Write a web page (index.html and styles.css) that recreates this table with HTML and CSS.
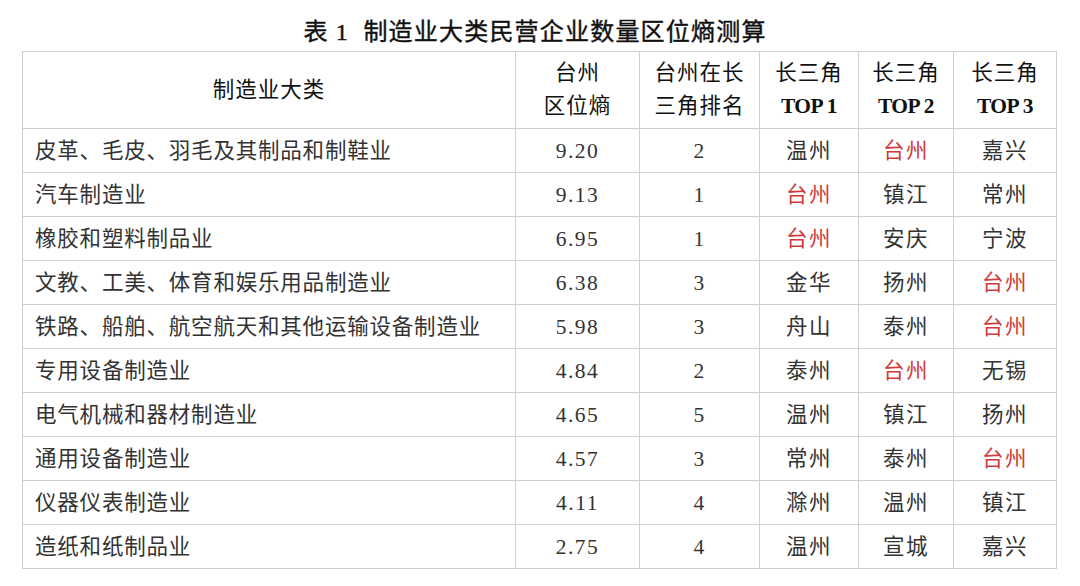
FILE: index.html
```html
<!DOCTYPE html>
<html lang="zh-CN">
<head>
<meta charset="utf-8">
<link rel="stylesheet" href="styles.css">
</head>
<body>
<div class="page">
  <h1 class="title">表 1&nbsp; 制造业大类民营企业数量区位熵测算</h1>
  <table class="tbl">
    <colgroup>
      <col class="c-name"><col class="c-val"><col class="c-rank"><col class="c-t1"><col class="c-t2"><col class="c-t3">
    </colgroup>
    <thead>
      <tr>
        <th>制造业大类</th>
        <th>台州<br>区位熵</th>
        <th>台州在长<br>三角排名</th>
        <th>长三角<br><b class="en">TOP 1</b></th>
        <th>长三角<br><b class="en">TOP 2</b></th>
        <th>长三角<br><b class="en">TOP 3</b></th>
      </tr>
    </thead>
    <tbody>
      <tr><td class="name">皮革、毛皮、羽毛及其制品和制鞋业</td><td>9.20</td><td>2</td><td>温州</td><td class="red">台州</td><td>嘉兴</td></tr>
      <tr><td class="name">汽车制造业</td><td>9.13</td><td>1</td><td class="red">台州</td><td>镇江</td><td>常州</td></tr>
      <tr><td class="name">橡胶和塑料制品业</td><td>6.95</td><td>1</td><td class="red">台州</td><td>安庆</td><td>宁波</td></tr>
      <tr><td class="name">文教、工美、体育和娱乐用品制造业</td><td>6.38</td><td>3</td><td>金华</td><td>扬州</td><td class="red">台州</td></tr>
      <tr><td class="name">铁路、船舶、航空航天和其他运输设备制造业</td><td>5.98</td><td>3</td><td>舟山</td><td>泰州</td><td class="red">台州</td></tr>
      <tr><td class="name">专用设备制造业</td><td>4.84</td><td>2</td><td>泰州</td><td class="red">台州</td><td>无锡</td></tr>
      <tr><td class="name">电气机械和器材制造业</td><td>4.65</td><td>5</td><td>温州</td><td>镇江</td><td>扬州</td></tr>
      <tr><td class="name">通用设备制造业</td><td>4.57</td><td>3</td><td>常州</td><td>泰州</td><td class="red">台州</td></tr>
      <tr><td class="name">仪器仪表制造业</td><td>4.11</td><td>4</td><td>滁州</td><td>温州</td><td>镇江</td></tr>
      <tr><td class="name">造纸和纸制品业</td><td>2.75</td><td>4</td><td>温州</td><td>宣城</td><td>嘉兴</td></tr>
    </tbody>
  </table>
</div>
</body>
</html>
```

FILE: styles.css
```css
html, body {
  margin: 0;
  padding: 0;
  background: #ffffff;
}

body {
  font-family: "Liberation Serif", "Noto Sans CJK SC", serif;
  color: #333333;
}

.page {
  width: 1080px;
  height: 586px;
  padding: 0 0 0 22px;
  box-sizing: border-box;
  overflow: hidden;
}

.title {
  margin: 0;
  width: 1026px;
  height: 51px;
  padding-top: 18px;
  box-sizing: border-box;
  text-align: center;
  font-size: 24px;
  line-height: 29px;
  font-weight: normal;
  color: #111111;
  letter-spacing: 1.2px;
  -webkit-text-stroke: 0.4px #111111;
}

.tbl {
  border-collapse: collapse;
  table-layout: fixed;
  width: 1034px;
  font-size: 21.5px;
}

.c-name { width: 493px; }
.c-val { width: 124px; }
.c-rank { width: 120px; }
.c-t1 { width: 99px; }
.c-t2 { width: 95px; }
.c-t3 { width: 103px; }

.tbl th,
.tbl td {
  border: 1.5px solid #cfcfcf;
  padding: 0;
  text-align: center;
  vertical-align: middle;
}

.tbl th {
  height: 76px;
  font-weight: normal;
  color: #111111;
  line-height: 33px;
  letter-spacing: 1px;
}

.tbl th .en {
  font-weight: bold;
  letter-spacing: -0.5px;
}

.tbl td {
  height: 43px;
  line-height: 26px;
  letter-spacing: 1.5px;
}

.tbl td.name {
  text-align: left;
  padding-left: 12px;
  letter-spacing: 0.8px;
}

.tbl td.red {
  color: #d23a3a;
}
```
